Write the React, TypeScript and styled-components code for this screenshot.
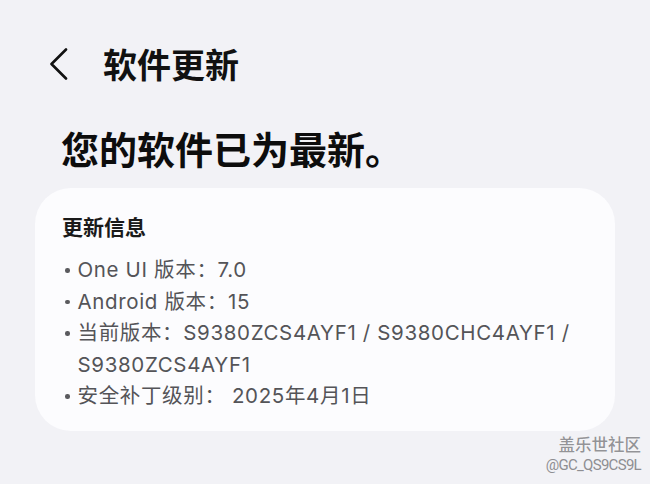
import styled, { createGlobalStyle } from "styled-components";

const GlobalStyle = createGlobalStyle`
  body {
    margin: 0;
    background: #f2f2f6;
    font-family: "Inter", "Noto Sans CJK SC", sans-serif;
  }
`;

const infoItems = [
  "One UI 版本：7.0",
  "Android 版本：15",
  "当前版本：S9380ZCS4AYF1 / S9380CHC4AYF1 / S9380ZCS4AYF1",
  "安全补丁级别： 2025年4月1日",
];

const App = () => {
  return (
    <>
      <GlobalStyle />
      <Page>
        <Header>
          <BackButton aria-label="返回">
            <svg width="20" height="32" viewBox="0 0 20 32" fill="none">
              <path
                d="M17 1.5 L2.5 16 L17 30.5"
                stroke="#111"
                strokeWidth="2.6"
                strokeLinecap="round"
                strokeLinejoin="round"
              />
            </svg>
          </BackButton>
          <Title>软件更新</Title>
        </Header>

        <Heading>您的软件已为最新。</Heading>

        <Card>
          <CardTitle>更新信息</CardTitle>
          <InfoList>
            {infoItems.map((text) => (
              <InfoItem key={text}>
                <Dot />
                <ItemText>{text}</ItemText>
              </InfoItem>
            ))}
          </InfoList>
        </Card>

        <Watermark>
          <WatermarkName>盖乐世社区</WatermarkName>
          <WatermarkUser>@GC_QS9CS9L</WatermarkUser>
        </Watermark>
      </Page>
    </>
  );
};

export default App;

const Page = styled.div`
  width: 650px;
  height: 484px;
  display: flex;
  flex-direction: column;
  overflow: hidden;
`;

const Header = styled.header`
  height: 128px;
  display: flex;
  align-items: center;
  gap: 34px;
  padding-left: 49px;
  box-sizing: border-box;
`;

const BackButton = styled.button`
  border: none;
  background: none;
  padding: 0;
  display: flex;
  align-items: center;
  cursor: pointer;
`;

const Title = styled.h1`
  margin: 0;
  font-size: 34px;
  line-height: 40px;
  font-weight: 700;
  color: #111;
  font-family: "Noto Sans CJK SC", sans-serif;
`;

const Heading = styled.h2`
  margin: 0 0 0 61px;
  font-size: 38px;
  line-height: 40px;
  font-weight: 700;
  color: #0d0d0d;
  font-family: "Noto Sans CJK SC", sans-serif;
`;

const Card = styled.section`
  margin: 20px 35px 0;
  padding: 23px 27px 19px;
  background: #fcfcfe;
  border-radius: 36px;
`;

const CardTitle = styled.h3`
  margin: 0;
  font-size: 21px;
  line-height: 30px;
  font-weight: 600;
  color: #1a1a1a;
  font-family: "Noto Sans CJK SC", sans-serif;
`;

const InfoList = styled.ul`
  list-style: none;
  margin: 13px 0 0;
  padding: 0;
`;

const InfoItem = styled.li`
  display: flex;
  align-items: flex-start;
  gap: 8px;
  padding-left: 3px;
`;

const Dot = styled.span`
  flex: none;
  width: 4.5px;
  height: 4.5px;
  margin-top: 14px;
  border-radius: 50%;
  background: #5a5a5e;
`;

const ItemText = styled.span`
  font-size: 20.5px;
  line-height: 31.5px;
  color: #545458;
  letter-spacing: 0.65px;
`;

const Watermark = styled.div`
  display: flex;
  flex-direction: column;
  align-items: flex-end;
  padding-right: 9px;
  margin-top: 2px;
`;

const WatermarkName = styled.span`
  font-family: "Noto Sans CJK SC", sans-serif;
  font-size: 16.5px;
  line-height: 22px;
  font-weight: 500;
  color: #939397;
  text-shadow: 0 0 1px #fff, 0 0 1px #fff;
`;

const WatermarkUser = styled.span`
  font-family: "Roboto", sans-serif;
  font-size: 15px;
  line-height: 20px;
  letter-spacing: -0.7px;
  color: #8e8e92;
`;
